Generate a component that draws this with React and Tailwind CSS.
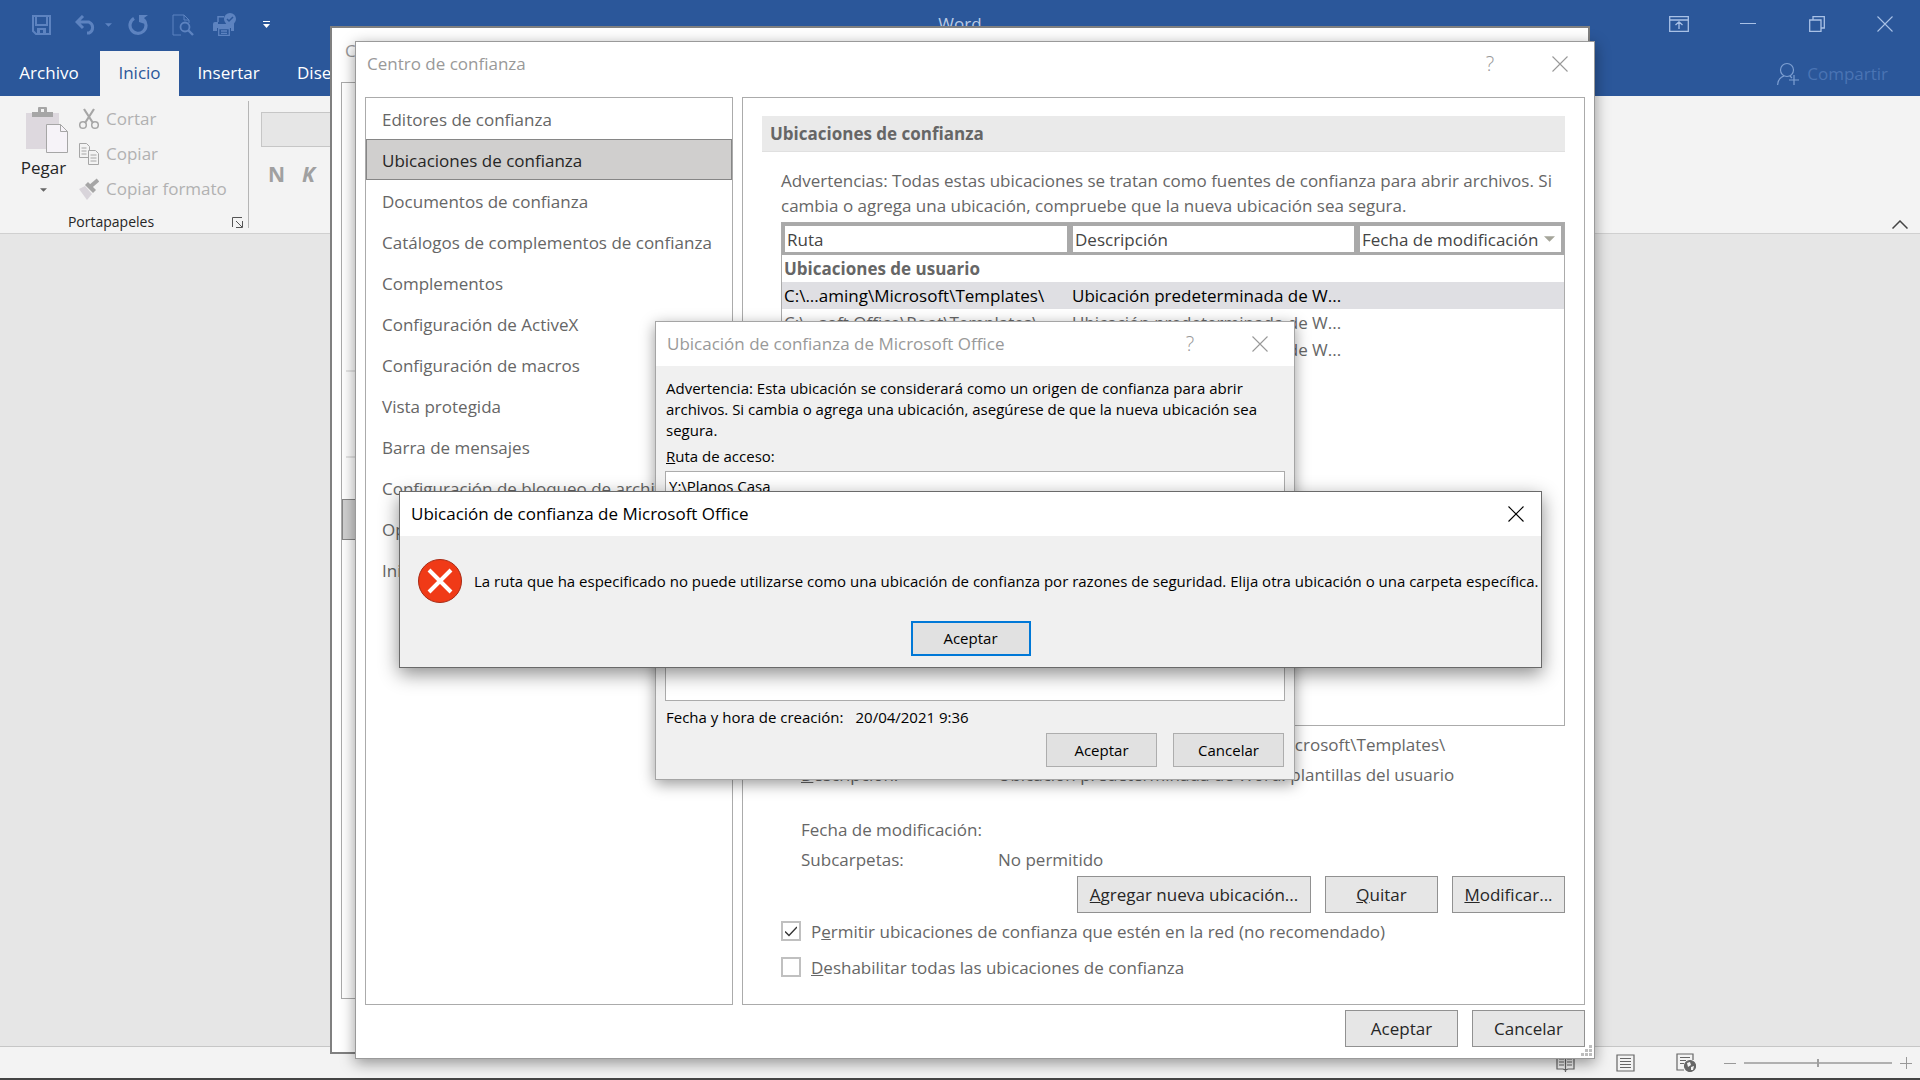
import React, { useState } from 'react';

const menuItems = [
  'Editores de confianza',
  'Ubicaciones de confianza',
  'Documentos de confianza',
  'Catálogos de complementos de confianza',
  'Complementos',
  'Configuración de ActiveX',
  'Configuración de macros',
  'Vista protegida',
  'Barra de mensajes',
  'Configuración de bloqueo de archivos',
  'Opciones de privacidad',
  'Inicio de sesión basado en formularios',
];

const locations = [
  { path: 'C:\\...aming\\Microsoft\\Templates\\', description: 'Ubicación predeterminada de W...' },
  { path: 'C:\\...soft Office\\Root\\Templates\\', description: 'Ubicación predeterminada de W...' },
  { path: 'C:\\...g\\Microsoft\\Word\\Startup\\', description: 'Ubicación predeterminada de W...' },
];

const CloseIcon = () => (
  <svg className="size-4" viewBox="0 0 16 16" fill="none" stroke="currentColor" strokeWidth="1.1">
    <path d="M.5.5l15 15M15.5.5l-15 15" />
  </svg>
);

const Caret = ({ className }) => (
  <svg className={className} viewBox="0 0 8 4" fill="currentColor">
    <path d="M0 0h8L4 4z" />
  </svg>
);

const TitleBar = () => (
  <div className="h-[51px] pb-1 flex items-center text-[#5d83c0]">
    <div className="flex-1 flex items-center pt-0.5">
      <button aria-label="Guardar" className="ml-8">
        <svg className="w-[19px] h-5" viewBox="0 0 19 20" fill="none" stroke="currentColor" strokeWidth="2">
          <path d="M1 1h17v18H4l-3-3zM4 1v9h11V1" />
          <path d="M5 13h9v6h-3v-4H8v4H5z" fill="currentColor" stroke="none" />
        </svg>
      </button>
      <button aria-label="Deshacer" className="ml-6">
        <svg className="w-[22px] h-5" viewBox="0 0 22 20" fill="none" stroke="currentColor" strokeWidth="3">
          <path d="M8 1L2 7l6 6M2 7h12a6 6 0 0 1 0 11h-2" />
        </svg>
      </button>
      <button aria-label="Opciones de deshacer" className="ml-2">
        <Caret className="w-[7px] h-1" />
      </button>
      <button aria-label="Repetir" className="ml-4">
        <svg className="w-[21px] h-5" viewBox="0 0 21 20" fill="none" stroke="currentColor" strokeWidth="3.2">
          <path d="M6 3.4A8 8 0 1 0 15.5 4.5" />
          <path d="M11 0h9l-4 3 1 6-6-2z" fill="currentColor" stroke="none" />
        </svg>
      </button>
      <button aria-label="Vista previa" className="ml-[23px]">
        <svg className="w-[22px] h-[22px]" viewBox="0 0 22 22" fill="none" stroke="currentColor">
          <path d="M9 21H1V1h11l5 5v3M12 1v5h5" />
          <circle cx="13" cy="13" r="4.5" strokeWidth="1.8" />
          <path d="M16 16l5 5" strokeWidth="2.4" />
        </svg>
      </button>
      <button aria-label="Impresión rápida" className="ml-[19px]">
        <svg className="w-6 h-[23px]" viewBox="0 0 24 23" fill="none">
          <path d="M5 9V3.7h6" stroke="currentColor" strokeWidth="1.5" />
          <path d="M2 9h3v2h12v-2h2q2 0 2 2v7h-3v-3H4v3H0v-7q0-2 2-2z" fill="currentColor" />
          <path d="M5.700 15.700h10.600v6.600H5.700zM8 18h6M8 20.300h6" stroke="currentColor" strokeWidth="1.3" />
          <circle cx="17" cy="6" r="6" fill="currentColor" />
          <path d="M14 6l2 2 4-4" stroke="#2b579a" strokeWidth="1.5" />
        </svg>
      </button>
      <button aria-label="Personalizar barra" className="ml-[26px] text-white">
        <svg className="w-[7px] h-[7px]" viewBox="0 0 7 7" fill="currentColor">
          <path d="M0 0h7v1H0zM0 3h7L3.5 7z" />
        </svg>
      </button>
    </div>
    <span className="text-[17px] text-[#b9cae4]">Word</span>
    <div className="flex-1 flex justify-end text-[#a9c1e6]">
      <button aria-label="Opciones de presentación" className="w-[69px] flex justify-center">
        <svg className="w-5 h-4" viewBox="0 0 20 16" fill="none" stroke="currentColor" strokeWidth="1.3">
          <path d="M.7.7h18.6v14.6H.7zM.7 4h18.6M10 13V6M6.5 9L10 5.8 13.5 9" />
        </svg>
      </button>
      <button aria-label="Minimizar" className="w-[69px] flex justify-center items-center">
        <span className="w-4 h-px bg-[#a9c1e6]" />
      </button>
      <button aria-label="Restaurar" className="w-[69px] flex justify-center">
        <svg className="size-4" viewBox="0 0 16 16" fill="none" stroke="currentColor" strokeWidth="1.3">
          <path d="M.7 4h11.3v11.3H.7zM4 4V.7h11.3V12H12" />
        </svg>
      </button>
      <button aria-label="Cerrar Word" className="w-[69px] pr-0.5 flex justify-center">
        <CloseIcon />
      </button>
    </div>
  </div>
);

const Ribbon = () => (
  <>
    <nav className="h-[45px] flex text-[17px] text-white">
      <button className="w-[100px] pr-0.5 pb-0.5">Archivo</button>
      <button className="w-[79px] pb-0.5 bg-[#f3f3f3] text-[#2b579a]">Inicio</button>
      <button className="w-[99px] pb-0.5">Insertar</button>
      <button className="px-[19px] pb-0.5">Diseño</button>
      <button className="ml-auto mr-8 flex items-center gap-2 text-[#4a74b4]">
        <svg className="w-[22px] h-6 text-[#7d9fd2]" viewBox="0 0 22 24" fill="none" stroke="currentColor" strokeWidth="1.2">
          <circle cx="10" cy="8" r="6.5" />
          <path d="M.6 23c.4-5 3-8 6.4-9M13 14l2 2M17 13v10M12 18h10" />
        </svg>
        Compartir
      </button>
    </nav>
    <div className="h-[138px] flex bg-[#f3f3f3] border-b border-[#d0d0d0]">
      <div className="w-[249px] py-[5px]">
        <div className="h-full flex flex-col border-r border-[#b5b5b5]">
          <div className="flex text-[17px]">
            <button className="w-[87px] pt-[6px] flex flex-col items-center text-[#262626]">
              <svg className="w-[42px] h-[46px] self-end mr-[19px]" viewBox="0 0 42 46">
                <path d="M0 6h33v36H0z" fill="#ddd8de" />
                <path d="M6 5h6V1q0-1 1-1h7q1 0 1 1v4h6v5H6z" fill="#a6a6a6" />
                <path d="M20.5 17.5h14l7 7v21h-21z" fill="#f6f3f8" stroke="#a6a6a6" />
                <path d="M34.5 17.5v7h7" fill="none" stroke="#a6a6a6" />
                <path d="M15 2h3v3h-3z" fill="#f3f3f3" />
              </svg>
              <span className="leading-6 mt-[3px]">Pegar</span>
              <Caret className="w-[7px] h-1 mt-2 text-[#666]" />
            </button>
            <div className="flex flex-col text-[#b1b1b1]">
              <button className="-ml-2 h-[35px] flex items-center gap-[7px]">
                <svg className="w-5 h-[22px]" viewBox="0 0 20 22" fill="none" stroke="#a6a6a6" strokeWidth="1.5">
                  <circle cx="4" cy="17" r="3.3" />
                  <circle cx="16" cy="17" r="3.3" />
                  <path d="M6 15L15 1M14 15L5 1" strokeWidth="2.2" />
                </svg>
                Cortar
              </button>
              <button className="-ml-2 h-[35px] flex items-center gap-[7px]">
                <svg className="w-5 h-[22px]" viewBox="0 0 20 22" fill="#f3f3f3" stroke="#a6a6a6">
                  <path d="M.5.5h7l3 3v11H.5zM2.5 5h5M2.5 8h5M2.5 11h5" />
                  <path d="M9.500 7.500h7l3 3v11h-10zM11.500 12h6M11.500 15h6M11.500 18h6" />
                </svg>
                Copiar
              </button>
              <button className="-ml-2 h-[35px] flex items-center gap-[7px]">
                <svg className="w-5 h-[22px]" viewBox="0 0 20 22">
                  <path d="M0 11l6-3 7 8-5 6z" fill="#d8d4da" />
                  <path d="M6 7l3-3 8 8-3 3z" fill="#a6a6a6" />
                  <path d="M12 8l7-6" stroke="#a6a6a6" strokeWidth="4" />
                </svg>
                Copiar formato
              </button>
            </div>
          </div>
          <div className="mt-auto flex items-center text-[14px] leading-3 text-[#262626]">
            <span className="flex-1 text-center pr-[10px]">Portapapeles</span>
            <button aria-label="Abrir portapapeles" className="mr-[5px]">
              <svg className="size-[11px]" viewBox="0 0 11 11" fill="none" stroke="#555">
                <path d="M.5 10V.5H10M4 4l6 6M10.500 4v6.500H4" />
              </svg>
            </button>
          </div>
        </div>
      </div>
      <div className="pl-3 pt-4">
        <input aria-label="Fuente" className="block w-[180px] h-[35px] bg-[#e6e6e6] border border-[#c6c6c6]" />
        <div className="flex mt-[11px] gap-[17px] pl-[7px] text-[21px] leading-8 font-bold text-[#a0a0a0]">
          <button>N</button>
          <button className="italic">K</button>
        </div>
      </div>
      <button aria-label="Contraer la cinta" className="ml-auto self-end mr-3 mb-1">
        <svg className="w-4 h-[9px]" viewBox="0 0 16 9" fill="none" stroke="#444" strokeWidth="1.5">
          <path d="M.5 8.500L8 1l7.500 7.500" />
        </svg>
      </button>
    </div>
  </>
);

const StatusBar = () => (
  <footer className="h-[34px] flex items-center justify-end pr-2 bg-[#f3f3f3] border-t border-[#c6c6c6] border-b-2 border-b-[#444]">
    <button aria-label="Modo de lectura">
      <svg className="w-[19px] h-[18px]" viewBox="0 0 19 18" fill="none" stroke="#666" strokeWidth="1.2">
        <path d="M1 1h6l2.500 1L12 1h6v14h-6l-2.500 1L7 15H1zM9.500 1v17M3 5h5M3 8h5M3 11h5M11 5h5M11 8h5M11 11h5" />
      </svg>
    </button>
    <button aria-label="Diseño de impresión" className="ml-[41px]">
      <svg className="w-[19px] h-[18px]" viewBox="0 0 19 18" fill="none" stroke="#666" strokeWidth="1.2">
        <path d="M1 1h17v16H1zM4 4.500h11M4 7.500h11M4 10.500h11M4 13.500h11" />
      </svg>
    </button>
    <button aria-label="Diseño web" className="ml-[41px]">
      <svg className="w-5 h-[19px]" viewBox="0 0 20 19" fill="none" stroke="#666" strokeWidth="1.2">
        <path d="M8 17H1V1h16v6M4 4.500h10M4 7.500h6M4 10.500h4" />
        <circle cx="14" cy="13" r="5.500" fill="#666" />
        <path d="M11 10l3-1 1 3-3 2zM15 14l3-1-1 4h-2z" fill="#f3f3f3" stroke="none" />
      </svg>
    </button>
    <button aria-label="Alejar" className="ml-7">
      <svg className="size-3" viewBox="0 0 12 12" stroke="#999"><path d="M0 6.500h12" /></svg>
    </button>
    <input
      type="range"
      aria-label="Zoom"
      className="w-[148px] h-[2px] mx-2 appearance-none bg-[#b0b0b0] [&::-webkit-slider-thumb]:appearance-none [&::-webkit-slider-thumb]:w-[2px] [&::-webkit-slider-thumb]:h-2 [&::-webkit-slider-thumb]:bg-[#a0a0a0]"
    />
    <button aria-label="Acercar">
      <svg className="size-3" viewBox="0 0 12 12" stroke="#999"><path d="M0 6.500h12M6.500 0v12" /></svg>
    </button>
  </footer>
);

const OptionsWindow = () => (
  <div className="absolute left-[330px] top-[26px] w-[1260px] h-[1028px] flex flex-col bg-white border-2 border-[#808080] pl-[9px] pr-2 pb-[53px]">
    <div className="h-[54px] pt-[9px] pl-1 text-[17px] leading-7 text-[#999]">C</div>
    <div className="flex-1 w-[380px] border border-[#ababab]">
      <div className="mt-[287px] mx-1 border-t-2 border-[#e6e6e6]" />
      <div className="mt-[84px] mx-1 border-t-2 border-[#e6e6e6]" />
      <div className="mt-[41px] h-[41px] bg-[#d0d0d0] border border-[#868686]" />
    </div>
  </div>
);

const GrayButton = ({ children, className }) => (
  <button className={`h-[37px] pt-px bg-[#e6e6e6] border border-[#919191] text-[17px] text-[#262626] whitespace-nowrap ${className}`}>
    {children}
  </button>
);

const Check = ({ checked, onChange, children }) => (
  <label className="h-9 flex items-center gap-[10px]">
    <span className="relative size-5">
      <input
        type="checkbox"
        checked={checked}
        onChange={onChange}
        className="peer block appearance-none size-5 border-2 border-[#c0c0c0] bg-white"
      />
      <svg
        className="hidden peer-checked:block absolute left-1 top-1 w-3 h-3 pointer-events-none"
        viewBox="0 0 12 12"
        fill="none"
        stroke="#333"
        strokeWidth="1.4"
      >
        <path d="M0 6.500L4 10.500 12 2" />
      </svg>
    </span>
    <span className="pt-0.5">{children}</span>
  </label>
);

const TrustCenter = () => {
  const [selected, setSelected] = useState('Ubicaciones de confianza');
  const [network, setNetwork] = useState(true);
  const [disabled, setDisabled] = useState(false);

  return (
    <section className="absolute left-[355px] top-[41px] w-[1240px] h-[1018px] flex flex-col bg-white border border-[#9a9a9a] px-[9px] pb-[11px] text-[17px] text-[#666] shadow-[0_4px_14px_rgba(0,0,0,0.4)]">
      <header className="h-11 mb-[11px] pl-[2px] pr-[17px] flex items-center text-[#999]">
        <h1 className="flex-1">Centro de confianza</h1>
        <button aria-label="Ayuda" className="text-[20px] font-light mr-[54px] w-4">?</button>
        <button aria-label="Cerrar">
          <CloseIcon />
        </button>
      </header>
      <div className="flex-1 flex gap-[9px]">
        <ul className="w-[368px] border border-[#ababab]">
          {menuItems.map((item) => (
            <li key={item}>
              <button
                onClick={() => setSelected(item)}
                className={`w-full h-[41px] pt-0.5 px-4 text-left whitespace-nowrap ${
                  item === selected ? 'bg-[#d0cfce] text-[#262626] outline outline-1 -outline-offset-1 outline-[#868686]' : ''
                }`}
              >
                {item}
              </button>
            </li>
          ))}
        </ul>
        <div className="flex-1 flex flex-col border border-[#ababab] px-[19px] pt-[18px] pb-[19px]">
          <h2 className="h-9 px-2 flex items-center bg-[#eaeaea] border-b border-[#e0e0e0] font-bold">Ubicaciones de confianza</h2>
          <div className="flex-1 flex flex-col pl-[19px]">
            <p className="mt-4 mb-1 leading-[25px]">
              Advertencias: Todas estas ubicaciones se tratan como fuentes de confianza para abrir archivos. Si
              cambia o agrega una ubicación, compruebe que la nueva ubicación sea segura.
            </p>
            <div className="flex-1 border border-[#ababab]">
              <table className="w-full table-fixed border-separate border-spacing-0 text-left whitespace-nowrap">
                <thead className="text-[#444]">
                  <tr className="h-8 leading-[25px]">
                    <th className="w-[288px] p-0 pl-[2px] border-3 border-[#a9a9a9] font-normal">Ruta</th>
                    <th className="w-[287px] p-0 pl-[2px] border-3 border-[#a9a9a9] font-normal">Descripción</th>
                    <th className="p-0 pl-[2px] border-3 border-[#a9a9a9] font-normal">
                      <span className="flex items-center justify-between pr-[6px]">
                        Fecha de modificación
                        <Caret className="w-[11px] h-[6px] text-[#a5a59a]" />
                      </span>
                    </th>
                  </tr>
                </thead>
                <tbody className="leading-[27px]">
                  <tr>
                    <th colSpan={3} className="p-0 pl-[2px] font-bold">Ubicaciones de usuario</th>
                  </tr>
                  {locations.map((row, i) => (
                    <tr key={row.path} className={i === 0 ? 'bg-[#dfdfe3] text-black' : ''}>
                      <td className="p-0 pl-[2px]">{row.path}</td>
                      <td className="p-0 pl-[2px]">{row.description}</td>
                      <td />
                    </tr>
                  ))}
                </tbody>
              </table>
            </div>
            <dl className="mt-1 mb-px pl-5 grid grid-cols-[197px_1fr] leading-[30px]">
              <dt>Ruta de acceso:</dt>
              <dd>C:\Users\carlos\AppData\Roaming\Microsoft\Templates\</dd>
              <dt><u>D</u>escripción:</dt>
              <dd className="mb-[25px]">Ubicación predeterminada de Word: plantillas del usuario</dd>
              <dt>Fecha de modificación:</dt>
              <dd />
              <dt>Subcarpetas:</dt>
              <dd>No permitido</dd>
            </dl>
            <div className="flex justify-end gap-[14px]">
              <GrayButton className="w-[234px]"><u>A</u>gregar nueva ubicación...</GrayButton>
              <GrayButton className="w-[113px]"><u>Q</u>uitar</GrayButton>
              <GrayButton className="w-[113px]"><u>M</u>odificar...</GrayButton>
            </div>
            <Check checked={network} onChange={(e) => setNetwork(e.target.checked)}>
              P<u>e</u>rmitir ubicaciones de confianza que estén en la red (no recomendado)
            </Check>
            <Check checked={disabled} onChange={(e) => setDisabled(e.target.checked)}>
              <u>D</u>eshabilitar todas las ubicaciones de confianza
            </Check>
          </div>
        </div>
      </div>
      <div className="mt-[5px] flex justify-end gap-[14px]">
        <GrayButton className="w-[113px]">Aceptar</GrayButton>
        <GrayButton className="w-[113px]">Cancelar</GrayButton>
      </div>
      <svg className="absolute right-[2px] bottom-[2px] size-[11px]" viewBox="0 0 11 11" fill="#bdbdbd">
        <path d="M8 0h3v3H8zM4 4h3v3H4zM8 4h3v3H8zM0 8h3v3H0zM4 8h3v3H4zM8 8h3v3H8z" />
      </svg>
    </section>
  );
};

const LocationDialog = () => {
  const [path, setPath] = useState('Y:\\Planos Casa');

  return (
    <section className="absolute left-[655px] top-[321px] w-[640px] h-[459px] flex flex-col bg-[#f0f0f0] border border-[#a5a5a5] text-[15px] text-black shadow-[0_4px_14px_rgba(0,0,0,0.4)]">
      <header className="h-11 pl-[11px] pr-[26px] flex items-center bg-white text-[17px] text-[#999]">
        <h1 className="flex-1">Ubicación de confianza de Microsoft Office</h1>
        <button aria-label="Ayuda" className="text-[20px] font-light mr-[54px] w-4">?</button>
        <button aria-label="Cerrar">
          <CloseIcon />
        </button>
      </header>
      <div className="flex-1 flex flex-col px-[9px] pt-3 pb-3">
        <p className="px-px leading-[21px]">
          Advertencia: Esta ubicación se considerará como un origen de confianza para abrir archivos. Si cambia o agrega una
          ubicación, asegúrese de que la nueva ubicación sea segura.
        </p>
        <label htmlFor="path" className="pl-px mt-[5px] mb-1 leading-[21px]"><u>R</u>uta de acceso:</label>
        <input
          id="path"
          value={path}
          onChange={(e) => setPath(e.target.value)}
          className="h-[30px] px-[3px] bg-white border border-[#ababab]"
        />
        <textarea aria-label="Descripción" className="mt-auto h-20 resize-none bg-white border border-[#ababab]" />
        <div className="mt-[6px] mb-[6px] pl-px flex gap-3 leading-5">
          <span>Fecha y hora de creación:</span>
          <span>20/04/2021 9:36</span>
        </div>
        <div className="flex justify-end gap-4 pr-px">
          <button className="w-[111px] h-[34px] bg-[#e1e1e1] border border-[#adadad]">Aceptar</button>
          <button className="w-[111px] h-[34px] bg-[#e1e1e1] border border-[#adadad]">Cancelar</button>
        </div>
      </div>
    </section>
  );
};

const ErrorDialog = () => (
  <section
    role="alertdialog"
    className="absolute left-[399px] top-[491px] w-[1143px] flex flex-col bg-[#f0f0f0] border border-[#6a6a6a] text-[15px] text-black shadow-[0_6px_18px_rgba(0,0,0,0.45)]"
  >
    <header className="h-11 pl-[11px] pr-[17px] flex items-center bg-white text-[17px]">
      <h1 className="flex-1">Ubicación de confianza de Microsoft Office</h1>
      <button aria-label="Cerrar">
        <CloseIcon />
      </button>
    </header>
    <div className="flex items-center gap-3 pl-[18px] pt-[23px]">
      <svg className="size-11 shrink-0" viewBox="0 0 44 44">
        <circle cx="22" cy="22" r="21.5" fill="#f03a17" stroke="#a82a14" />
        <path d="M11 11l22 22M33 11L11 33" stroke="#fff" strokeWidth="4" />
      </svg>
      <p className="whitespace-nowrap">
        La ruta que ha especificado no puede utilizarse como una ubicación de confianza por razones de seguridad. Elija otra
        ubicación o una carpeta específica.
      </p>
    </div>
    <button className="mx-auto mt-[18px] mb-[11px] w-[120px] h-[35px] bg-[#e1e1e1] border-2 border-[#0078d7]">Aceptar</button>
  </section>
);

const App = () => (
  <div className="relative min-h-screen overflow-hidden flex flex-col bg-[#e6e6e6] font-['Open_Sans','Noto_Sans',sans-serif]">
    <div className="bg-[#2b579a]">
      <TitleBar />
      <Ribbon />
    </div>
    <main className="flex-1" />
    <StatusBar />
    <OptionsWindow />
    <TrustCenter />
    <LocationDialog />
    <ErrorDialog />
  </div>
);

export default App;
